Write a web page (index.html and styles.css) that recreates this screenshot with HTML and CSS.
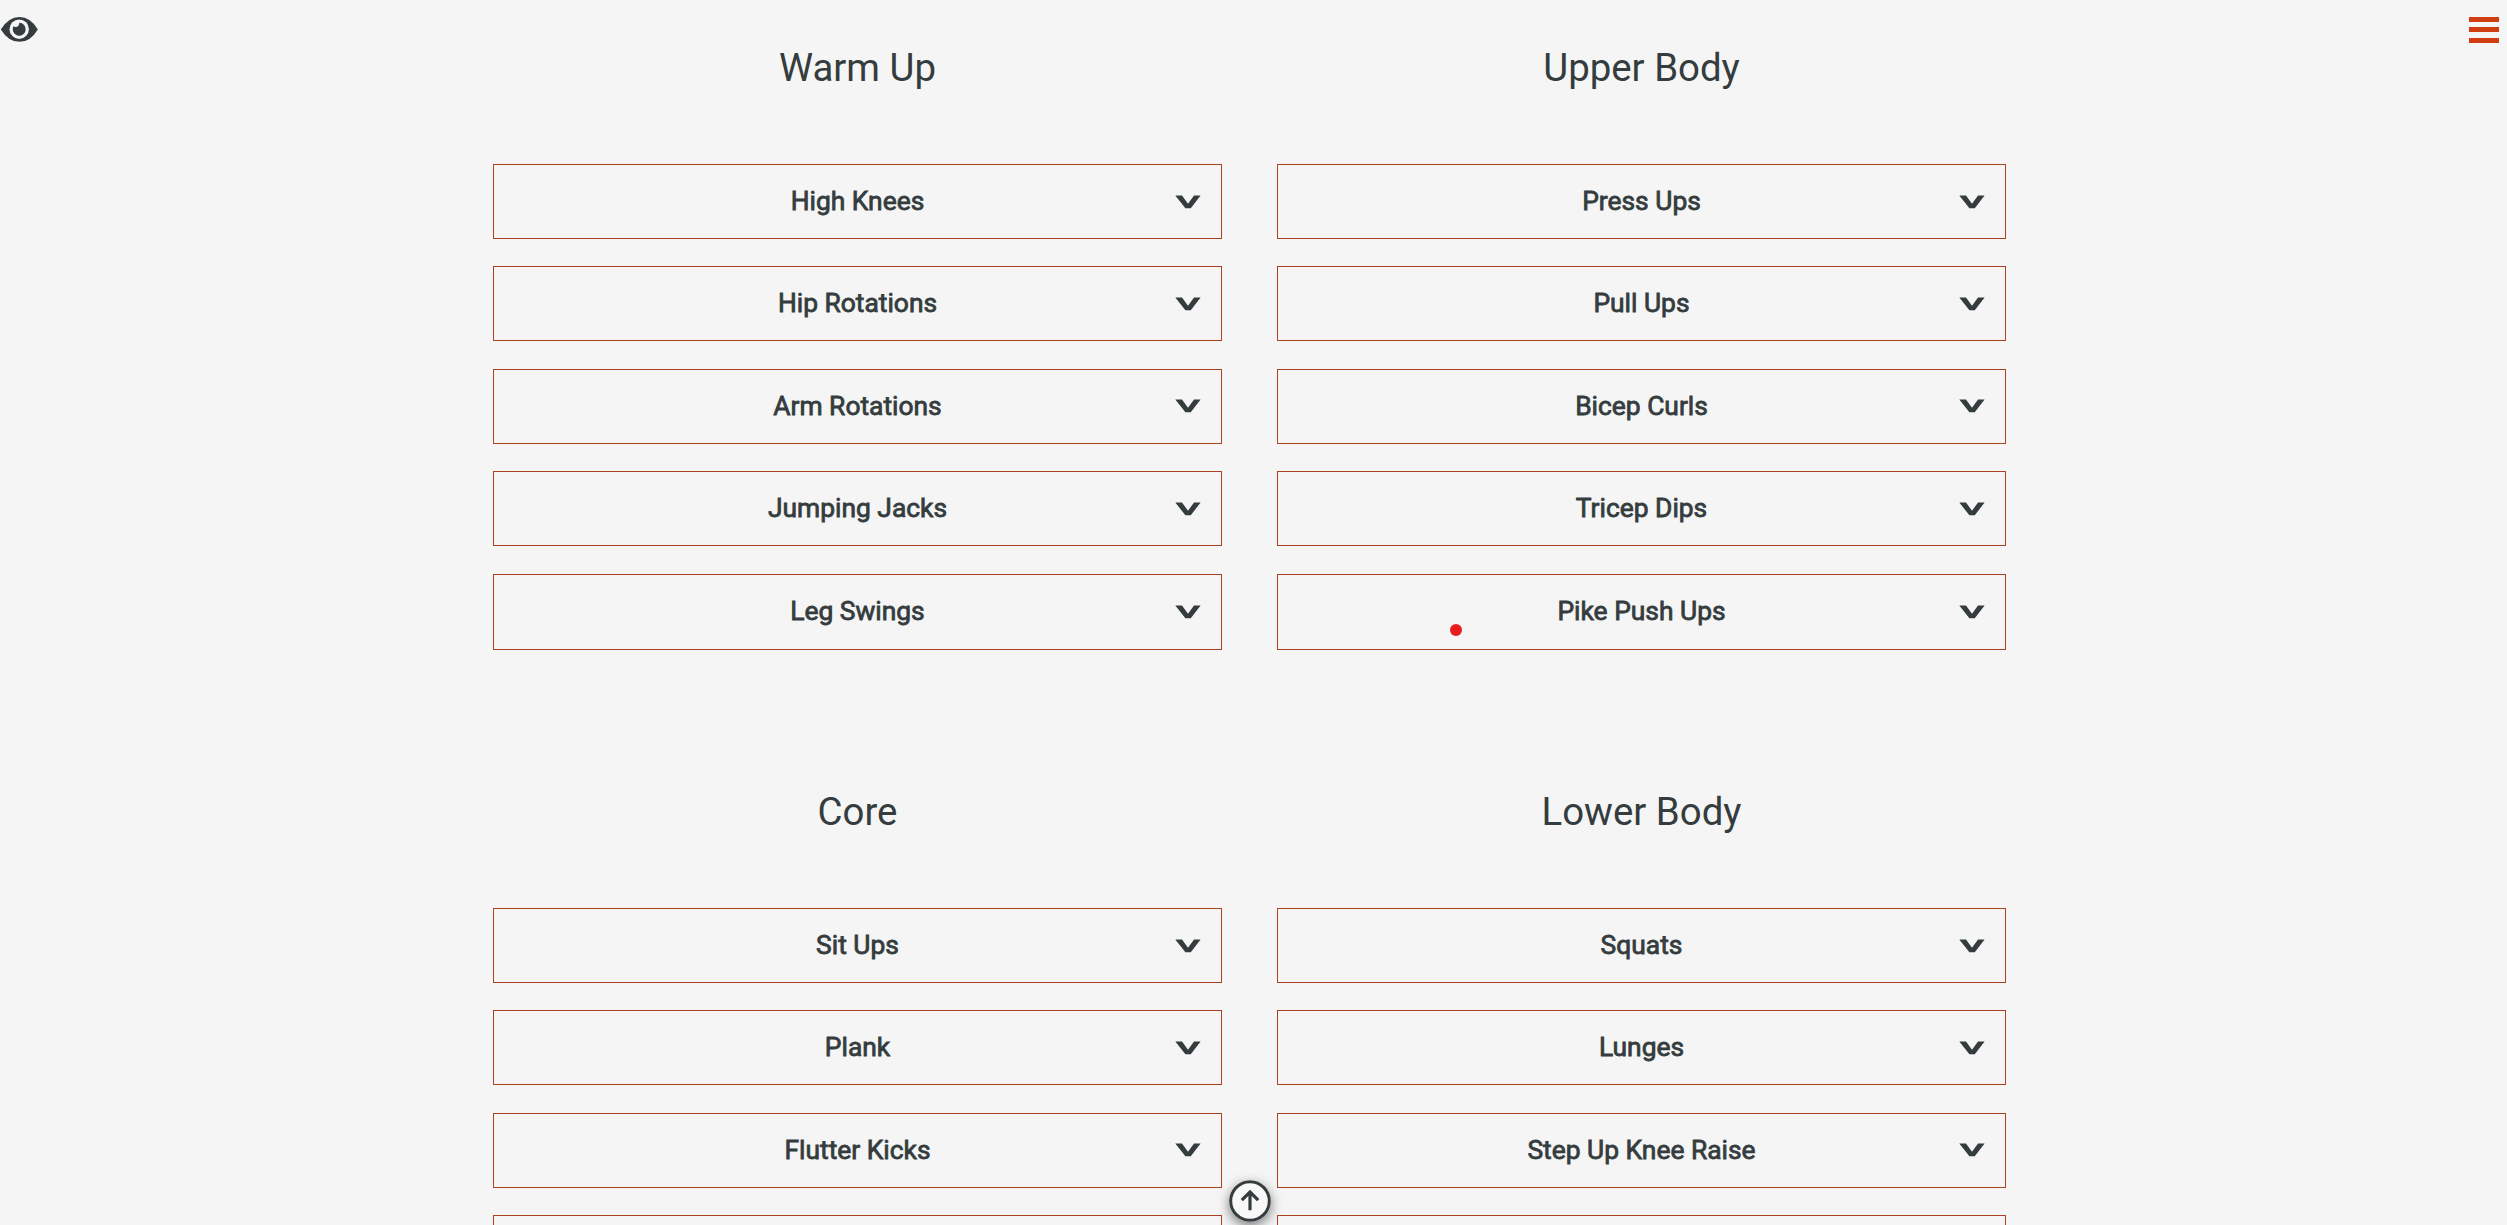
FILE: index.html
```html
<!DOCTYPE html>
<html lang="en">
<head>
<meta charset="utf-8">
<title>Workout Builder</title>
<link rel="stylesheet" href="styles.css">
</head>
<body>
<svg width="0" height="0" class="sprite" aria-hidden="true">
  <symbol id="chevron" viewBox="0 0 26 14"><path d="M.3.6H7L13 8.7 19 .6H25.6L15.8 13.2H10.4Z" fill="currentColor"/></symbol>
</svg>

<button class="corner corner-left" aria-label="Toggle view">
  <svg width="40" height="28" viewBox="0 0 40 28"><path d="M.8 14.4Q8.5 2 19.5 2T37.8 14.4Q30.5 26.8 19.5 26.8T.8 14.4Z" fill="#343c3e"/><circle cx="19.2" cy="14.2" r="9.7" fill="#f5f5f5"/><path d="M19.2 7.7A6.5 6.5 0 1 1 13.4 11.3A3.7 3.7 0 0 0 19.2 7.7Z" fill="#343c3e"/></svg>
</button>
<button class="corner corner-right" aria-label="Menu"><span></span><span></span><span></span></button>

<main class="sections">
  <section class="group">
    <h2>Warm Up</h2>
    <ul>
      <li><span>High Knees</span><svg class="chev"><use href="#chevron"/></svg></li>
      <li><span>Hip Rotations</span><svg class="chev"><use href="#chevron"/></svg></li>
      <li><span>Arm Rotations</span><svg class="chev"><use href="#chevron"/></svg></li>
      <li><span>Jumping Jacks</span><svg class="chev"><use href="#chevron"/></svg></li>
      <li><span>Leg Swings</span><svg class="chev"><use href="#chevron"/></svg></li>
    </ul>
  </section>
  <section class="group">
    <h2>Upper Body</h2>
    <ul>
      <li><span>Press Ups</span><svg class="chev"><use href="#chevron"/></svg></li>
      <li><span>Pull Ups</span><svg class="chev"><use href="#chevron"/></svg></li>
      <li><span>Bicep Curls</span><svg class="chev"><use href="#chevron"/></svg></li>
      <li><span>Tricep Dips</span><svg class="chev"><use href="#chevron"/></svg></li>
      <li><span>Pike Push Ups</span><svg class="chev"><use href="#chevron"/></svg></li>
    </ul>
  </section>
  <section class="group">
    <h2>Core</h2>
    <ul>
      <li><span>Sit Ups</span><svg class="chev"><use href="#chevron"/></svg></li>
      <li><span>Plank</span><svg class="chev"><use href="#chevron"/></svg></li>
      <li><span>Flutter Kicks</span><svg class="chev"><use href="#chevron"/></svg></li>
      <li></li>
    </ul>
  </section>
  <section class="group">
    <h2>Lower Body</h2>
    <ul>
      <li><span>Squats</span><svg class="chev"><use href="#chevron"/></svg></li>
      <li><span>Lunges</span><svg class="chev"><use href="#chevron"/></svg></li>
      <li><span>Step Up Knee Raise</span><svg class="chev"><use href="#chevron"/></svg></li>
      <li></li>
    </ul>
  </section>
</main>

<div class="pointer"></div>
<button class="to-top" aria-label="Back to top">
  <svg width="42" height="42" viewBox="0 0 42 42"><circle cx="21" cy="21" r="19.3" fill="#f8f8f8" stroke="#343c3e" stroke-width="3"/><path d="M21 30.3V12.5M12.8 20.2L21 12L29.2 20.2" fill="none" stroke="#343c3e" stroke-width="3.2"/></svg>
</button>
</body>
</html>
```
FILE: styles.css
```css
* { box-sizing: border-box; }

html, body {
  margin: 0;
  height: 1225px;
  overflow: hidden;
}

body {
  background: #f5f5f5;
  color: #343c3e;
  font-family: Roboto, "Liberation Sans", sans-serif;
}

button {
  padding: 0;
  border: 0;
  background: none;
}

.sprite { position: absolute; }

.sections {
  display: grid;
  grid-template-columns: 729px 729px;
  grid-template-rows: 744px 481px;
  column-gap: 55px;
  width: 1513px;
  height: 1225px;
  margin-left: 493px;
  overflow: hidden;
}

.group h2 {
  margin: 0;
  padding-top: 44px;
  height: 164px;
  font-size: 38.4px;
  font-weight: 400;
  line-height: 47px;
  text-align: center;
}

.group ul {
  display: flex;
  flex-direction: column;
  gap: 27.4px;
  margin: 0;
  padding: 0;
  list-style: none;
}

.group li {
  display: grid;
  grid-template-columns: 1fr auto 1fr;
  align-items: center;
  height: 75px;
  padding-right: 20.5px;
  padding-left: 20.5px;
  border: 1px solid #ae4024;
  font-size: 26.4px;
  line-height: 30px;
  white-space: nowrap;
}

.group li:nth-child(5) { height: 76px; }

.group li span {
  grid-column: 2;
  margin-top: -1px;
  -webkit-text-stroke: 0.8px #343c3e;
}

.chev {
  justify-self: end;
  width: 26px;
  height: 14px;
}

.corner, .to-top, .pointer { position: fixed; }

.corner-left {
  left: 0;
  top: 15px;
  height: 28px;
}

.corner-right {
  left: 2469px;
  top: 17px;
  display: flex;
  flex-direction: column;
  gap: 5.4px;
}

.corner-right span {
  width: 29.5px;
  height: 5px;
  background: #d13c10;
}

.to-top {
  left: 1229px;
  top: 1180px;
  width: 42px;
  height: 42px;
  border-radius: 50%;
  box-shadow: 0 4px 12px rgba(0, 0, 0, 0.5);
}

.to-top svg, .corner svg { display: block; }

.pointer {
  left: 1449.5px;
  top: 623.5px;
  width: 12.5px;
  height: 12.5px;
  border-radius: 50%;
  background: #e81c1c;
}
```
